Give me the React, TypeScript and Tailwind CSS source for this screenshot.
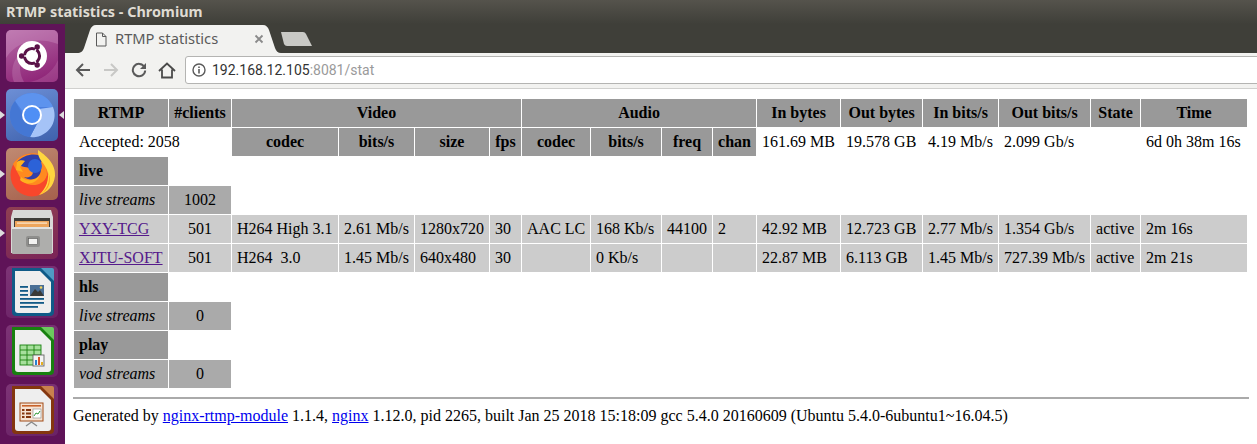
const th = "bg-[#999] p-[5px] text-center font-bold";
const head = th + " align-middle";
const cell = "bg-[#ccc] p-[5px] text-left font-normal";
const center = "bg-[#ccc] p-[5px] text-center";
const plain = "p-[5px] text-left";
const section = "bg-[#999] p-[5px] text-left font-bold";
const sub = "bg-[#aaa] p-[5px] text-left italic";
const subNum = "bg-[#aaa] p-[5px] text-center";
const visited = "text-[#551a8b] underline";
const link = "text-[#0000ee] underline";

const streams = [
  ["YXY-TCG", "501", "H264 High 3.1", "2.61 Mb/s", "1280x720", "30", "AAC LC", "168 Kb/s", "44100", "2", "42.92 MB", "12.723 GB", "2.77 Mb/s", "1.354 Gb/s", "active", "2m 16s"],
  ["XJTU-SOFT", "501", "H264\u00a0 3.0", "1.45 Mb/s", "640x480", "30", "", "0 Kb/s", "", "", "22.87 MB", "6.113 GB", "1.45 Mb/s", "727.39 Mb/s", "active", "2m 21s"],
];

const Tile = ({ from, to, children }: { from: string; to: string; children: React.ReactNode }) => (
  <div
    className="w-[52px] h-[52px] rounded-[5px] overflow-hidden"
    style={{ background: `linear-gradient(160deg, ${from}, ${to})` }}
  >
    <svg viewBox="0 0 52 52" className="w-full h-full">
      {children}
    </svg>
  </div>
);

const PipLeft = () => (
  <span className="absolute left-0 top-1/2 -translate-y-1/2 w-0 h-0 border-y-[4px] border-y-transparent border-l-[5px] border-l-[#ddd]" />
);

const PipRight = () => (
  <span className="absolute right-[1px] top-1/2 -translate-y-1/2 w-0 h-0 border-y-[4px] border-y-transparent border-r-[5px] border-r-[#ddd]" />
);

const Launcher = () => (
  <aside className="w-[65px] shrink-0 bg-[#5f1358] flex flex-col gap-[7px] pt-[6px] items-center pr-[1px]">
    <Tile from="#b56aa6" to="#8a1c72">
      <path d="M0 28 C10 12 30 6 52 14 V0 H0Z" fill="#d9a6cf" opacity="0.3" />
      <path d="M8 52 C2 36 12 18 30 14 C14 22 10 38 18 52Z" fill="#d9a6cf" opacity="0.25" />
      <path d="M52 30 C46 44 34 50 24 52 H52Z" fill="#d9a6cf" opacity="0.2" />
      <circle cx="26" cy="26" r="15" fill="#fff" />
      <circle cx="26" cy="26" r="7.6" fill="none" stroke="#5a1248" strokeWidth="3" />
      <path d="M26 26 L14 26 M26 26 L32 15.6 M26 26 L32 36.4" stroke="#fff" strokeWidth="1.4" />
      <circle cx="26" cy="26" r="5.4" fill="#fff" />
      <circle cx="15.6" cy="26" r="2.7" fill="#5a1248" />
      <circle cx="31.2" cy="17" r="2.7" fill="#5a1248" />
      <circle cx="31.2" cy="35" r="2.7" fill="#5a1248" />
    </Tile>
    <div className="relative w-[65px] flex justify-center pr-[1px]">
      <PipLeft />
      <Tile from="#6d8fd6" to="#3f62ad">
        <circle cx="26" cy="26" r="22" fill="#4a7fe0" />
        <path d="M26 4 A22 22 0 0 1 47 18 L26 18 A8 8 0 0 0 18 24 L9 12 A22 22 0 0 1 26 4Z" fill="#5d93ee" />
        <path d="M47 18 A22 22 0 0 1 24 48 L33 31 A8 8 0 0 0 33 20Z" fill="#a5c3f7" />
        <path d="M9 12 L19 30 A8 8 0 0 0 33 31 L24 48 A22 22 0 0 1 9 12Z" fill="#4477d4" />
        <circle cx="26" cy="26" r="10" fill="#fff" />
        <circle cx="26" cy="26" r="8" fill="#4f8ff5" />
      </Tile>
      <PipRight />
    </div>
    <div className="relative w-[65px] flex justify-center pr-[1px]">
      <PipLeft />
      <Tile from="#c08a72" to="#a5604c">
        <circle cx="26" cy="27" r="21.5" fill="#f8472b" />
        <path d="M7 16 C14 5 30 2 40 9 L41 27 C38 38 24 40 16 33Z" fill="#ff8a1f" />
        <path d="M11 14 C18 6 31 4 39 10 C35 12 34 16 35 21 C35 31 24 34 18 29 C25 31 29 25 26 21 C22 18 15 21 11 14Z" fill="#2f3fa8" />
        <circle cx="29" cy="18" r="7" fill="#2c62d8" />
        <path d="M15 29 C21 34 30 33 34 27 C31 36 20 38 14 32Z" fill="#ffb21f" />
        <path d="M32 2 C39 7 50 15 49 28 C48 38 41 45 33 47 C40 41 44 31 41 22 C38 14 31 11 32 2Z" fill="#ffd63f" />
        <path d="M33 47 C41 43 45 33 42 24 C46 32 44 42 33 47Z" fill="#ff9a1f" />
        <path d="M11 14 C13 12 17 12 19 13 L14 19 L17 24 L10 22Z" fill="#ffb21f" />
      </Tile>
    </div>
    <div className="relative w-[65px] flex justify-center pr-[1px]">
      <PipLeft />
      <Tile from="#8f4052" to="#7a2457">
        <path d="M7 3 H45 L47 10 V46 H5 V10Z" fill="#d8d8d6" />
        <rect x="8" y="11" width="36" height="15" fill="#3e3c38" />
        <rect x="9" y="14" width="34" height="7" fill="#eda55c" />
        <rect x="11" y="15.5" width="30" height="1.2" fill="#fbe9d0" />
        <rect x="6" y="20" width="40" height="27" rx="1" fill="#aeaeac" />
        <rect x="6" y="20" width="40" height="2" fill="#e2e2e0" />
        <rect x="20" y="29" width="14" height="11" rx="2" fill="#8e8e8c" />
        <rect x="22.5" y="31.5" width="9" height="6" fill="#f2f2f0" stroke="#555" strokeWidth="0.6" />
      </Tile>
    </div>
    <Tile from="#7d3476" to="#6a2266">
      <path d="M6 2 H36 L48 14 V46 Q48 50 44 50 H10 Q6 50 6 46Z" fill="#0f5a87" />
      <path d="M35 2 H46 Q48 2 48 4 V15Z" fill="#4f9cc4" />
      <path d="M9 5 H34 L45 16 V44 Q45 47 42 47 H12 Q9 47 9 44Z" fill="#eeeeee" />
      <g fill="#125a87">
        <rect x="14" y="20" width="8" height="1.8" />
        <rect x="14" y="24" width="8" height="1.8" />
        <rect x="14" y="28" width="8" height="1.8" />
        <rect x="14" y="32" width="24" height="1.8" />
        <rect x="14" y="36" width="24" height="1.8" />
        <rect x="14" y="40" width="18" height="1.8" />
      </g>
      <rect x="24" y="19" width="14" height="11" fill="#4a6f96" />
      <path d="M24 30 L29 23 L32 26 L34 24 L38 30Z" fill="#3a3a38" />
      <circle cx="35" cy="21.5" r="1.3" fill="#f4d35e" />
    </Tile>
    <Tile from="#7d3476" to="#6a2266">
      <path d="M6 2 H36 L48 14 V46 Q48 50 44 50 H10 Q6 50 6 46Z" fill="#18800f" />
      <path d="M35 2 H46 Q48 2 48 4 V15Z" fill="#6cc95e" />
      <path d="M9 5 H34 L45 16 V44 Q45 47 42 47 H12 Q9 47 9 44Z" fill="#eeeeee" />
      <rect x="14" y="20" width="21" height="20" fill="#a6e09c" stroke="#18800f" strokeWidth="0.9" />
      <path d="M14 25 H35 M14 30 H35 M14 35 H35 M21 20 V40 M28 20 V40" stroke="#18800f" strokeWidth="0.9" />
      <rect x="27" y="30" width="11" height="11" fill="#f4f4f4" stroke="#666" strokeWidth="0.9" />
      <rect x="29" y="35" width="2" height="5" fill="#2a7fd0" />
      <rect x="32" y="32" width="2" height="8" fill="#d8502a" />
      <rect x="35" y="37" width="2" height="3" fill="#e6b020" />
    </Tile>
    <Tile from="#7d3476" to="#6a2266">
      <path d="M6 2 H36 L48 14 V46 Q48 50 44 50 H10 Q6 50 6 46Z" fill="#84360f" />
      <path d="M35 2 H46 Q48 2 48 4 V15Z" fill="#c9814e" />
      <path d="M9 5 H34 L45 16 V44 Q45 47 42 47 H12 Q9 47 9 44Z" fill="#eeeeee" />
      <rect x="14" y="19" width="23" height="18" fill="#f6e3d4" stroke="#a04a16" strokeWidth="1" />
      <rect x="16" y="21" width="19" height="1.6" fill="#c8622a" />
      <g fill="#84360f">
        <rect x="16" y="25" width="2.5" height="2" />
        <rect x="16" y="28.5" width="2.5" height="2" />
        <rect x="16" y="32" width="2.5" height="2" />
        <rect x="20" y="25" width="5" height="2" />
        <rect x="20" y="28.5" width="5" height="2" />
        <rect x="20" y="32" width="5" height="2" />
      </g>
      <rect x="27" y="25" width="8" height="9" fill="#fff" stroke="#888" strokeWidth="0.6" />
      <path d="M28 32 L30 29 L32 30 L34 27" stroke="#2f9a3a" strokeWidth="1" fill="none" />
      <path d="M20 42 L25.5 38 L31 42" stroke="#8a8a8a" strokeWidth="1.4" fill="none" />
    </Tile>
  </aside>
);

const TabStrip = () => (
  <div className="h-[29px] shrink-0 bg-[#3f3f39] flex items-end pl-[12px]">
    <div className="relative w-[204px] h-[28px] flex items-center pl-[18px] pr-[17px] gap-[8px]">
      <svg viewBox="0 0 204 28" className="absolute inset-0 w-full h-full">
        <path d="M0 28 C4 28 6 26 7 23 L13 5 C14 2 16 0 19 0 H186 C189 0 191 2 192 5 L198 23 C199 26 201 28 204 28Z" fill="#f2f2f0" />
      </svg>
      <svg viewBox="0 0 12 15" className="relative w-[12px] h-[15px] fill-none stroke-[#5a5a5a]">
        <path d="M1.5 1 H7.5 L11 4.5 V14 H1.5Z M7.5 1 V4.5 H11" strokeWidth="1" />
      </svg>
      <span className="relative flex-1 pb-[2px] text-[14.7px] leading-[18px] text-[#5a5a5a] font-['Noto_Sans',sans-serif]">RTMP statistics</span>
      <svg viewBox="0 0 10 10" className="relative w-[10px] h-[10px] stroke-[#8a8a8a]">
        <path d="M1.5 1.5 L8.5 8.5 M8.5 1.5 L1.5 8.5" strokeWidth="1.8" />
      </svg>
    </div>
    <svg viewBox="0 0 33 16" className="w-[33px] h-[16px] mb-[6px] ml-[-1px]">
      <path d="M1 1 H23 Q25 1 26 3 L32 15 H7 Q5 15 4 13Z" fill="#c9c9c5" />
    </svg>
  </div>
);

const Toolbar = () => (
  <div className="h-[36px] shrink-0 bg-[#f2f2f0] border-b border-[#d0d0ce] flex items-center pl-[10px] gap-[12px] pb-[1px]">
    <svg viewBox="0 0 16 16" className="w-[16px] h-[16px] fill-none stroke-[#5a5a5a]">
      <path d="M15 8 H2 M8 2 L2 8 L8 14" strokeWidth="2" />
    </svg>
    <svg viewBox="0 0 16 16" className="w-[16px] h-[16px] fill-none stroke-[#c8c8c6]">
      <path d="M1 8 H14 M8 2 L14 8 L8 14" strokeWidth="2" />
    </svg>
    <svg viewBox="0 0 16 16" className="w-[16px] h-[16px] fill-none">
      <path d="M13.4 5 A6.2 6.2 0 1 0 14.2 8.5" stroke="#5a5a5a" strokeWidth="2" />
      <path d="M15 1 V7 H9Z" fill="#5a5a5a" />
    </svg>
    <svg viewBox="0 0 18 17" className="w-[18px] h-[17px] fill-none stroke-[#4a4a4a] ml-[-1px]">
      <path d="M1 9 L9 1.5 L17 9 M4 7.5 V15.5 H14 V7.5" strokeWidth="1.8" />
    </svg>
    <div className="flex-1 h-[28px] ml-[-3px] mr-[-4px] bg-white border border-[#b4b4b2] rounded-l-[3px] flex items-center pl-[6px] gap-[6px] text-[14px] leading-[18px] font-['Roboto',sans-serif]">
      <svg viewBox="0 0 14 14" className="w-[14px] h-[14px] fill-none stroke-[#5a5a5a]">
        <circle cx="7" cy="7" r="6" strokeWidth="1.4" />
        <path d="M7 6 V10.5 M7 3.5 V5" strokeWidth="1.6" />
      </svg>
      <span className="text-[#333]">
        192.168.12.105<span className="text-[#9a9a9a]">:8081/stat</span>
      </span>
    </div>
  </div>
);

const StatsTable = () => (
  <table className="table-fixed w-[1175px] whitespace-nowrap border-separate border-spacing-[1px]">
    <colgroup>
      <col className="w-[94px]" />
      <col className="w-[62px]" />
      <col className="w-[106px]" />
      <col className="w-[75px]" />
      <col className="w-[74px]" />
      <col className="w-[31px]" />
      <col className="w-[68px]" />
      <col className="w-[70px]" />
      <col className="w-[50px]" />
      <col className="w-[43px]" />
      <col className="w-[83px]" />
      <col className="w-[81px]" />
      <col className="w-[75px]" />
      <col className="w-[91px]" />
      <col className="w-[49px]" />
      <col className="w-[106px]" />
    </colgroup>
    <tbody>
      <tr>
        <th className={head}>RTMP</th>
        <th className={head}>#clients</th>
        <th className={head} colSpan={4}>Video</th>
        <th className={head} colSpan={4}>Audio</th>
        <th className={head}>In bytes</th>
        <th className={head}>Out bytes</th>
        <th className={head}>In bits/s</th>
        <th className={head}>Out bits/s</th>
        <th className={head}>State</th>
        <th className={head}>Time</th>
      </tr>
      <tr>
        <td className={plain} colSpan={2}>Accepted: 2058</td>
        <th className={th}>codec</th>
        <th className={th}>bits/s</th>
        <th className={th}>size</th>
        <th className={th}>fps</th>
        <th className={th}>codec</th>
        <th className={th}>bits/s</th>
        <th className={th}>freq</th>
        <th className={th}>chan</th>
        <td className={plain}>161.69 MB</td>
        <td className={plain}>19.578 GB</td>
        <td className={plain}>4.19 Mb/s</td>
        <td className={plain}>2.099 Gb/s</td>
        <td className={plain}></td>
        <td className={plain}>6d 0h 38m 16s</td>
      </tr>
      <tr>
        <td className={section}>live</td>
      </tr>
      <tr>
        <td className={sub}>live streams</td>
        <td className={subNum}>1002</td>
      </tr>
      {streams.map((row) => (
        <tr key={row[0]}>
          {row.map((value, i) =>
            i === 0 ? (
              <td key={i} className={cell}>
                <a href="#" className={visited}>{value}</a>
              </td>
            ) : (
              <td key={i} className={i === 1 ? center : cell}>{value}</td>
            )
          )}
        </tr>
      ))}
      <tr>
        <td className={section}>hls</td>
      </tr>
      <tr>
        <td className={sub}>live streams</td>
        <td className={subNum}>0</td>
      </tr>
      <tr>
        <td className={section}>play</td>
      </tr>
      <tr>
        <td className={sub}>vod streams</td>
        <td className={subNum}>0</td>
      </tr>
    </tbody>
  </table>
);

export default function App() {
  return (
    <div className="h-[444px] overflow-hidden flex flex-col bg-white">
      <header className="h-[24px] shrink-0 bg-gradient-to-b from-[#55534c] to-[#3f3f39] pl-[6px] text-[14.4px] leading-[24px] font-bold text-[#dfdbd2] font-['Noto_Sans',sans-serif]">
        RTMP statistics - Chromium
      </header>
      <div className="flex flex-1 min-h-0">
        <Launcher />
        <main className="flex-1 min-w-0 flex flex-col">
          <TabStrip />
          <Toolbar />
          <div className="px-2 pt-[9px] text-[16px] leading-[18px] text-black font-['Liberation_Serif',serif]">
            <StatsTable />
            <hr className="my-2 border-t-2 border-[#aaa]" />
            <p>
              Generated by <a href="#" className={link}>nginx-rtmp-module</a> 1.1.4, <a href="#" className={link}>nginx</a> 1.12.0, pid 2265, built Jan 25 2018 15:18:09 gcc 5.4.0 20160609 (Ubuntu 5.4.0-6ubuntu1~16.04.5)
            </p>
          </div>
        </main>
      </div>
    </div>
  );
}
